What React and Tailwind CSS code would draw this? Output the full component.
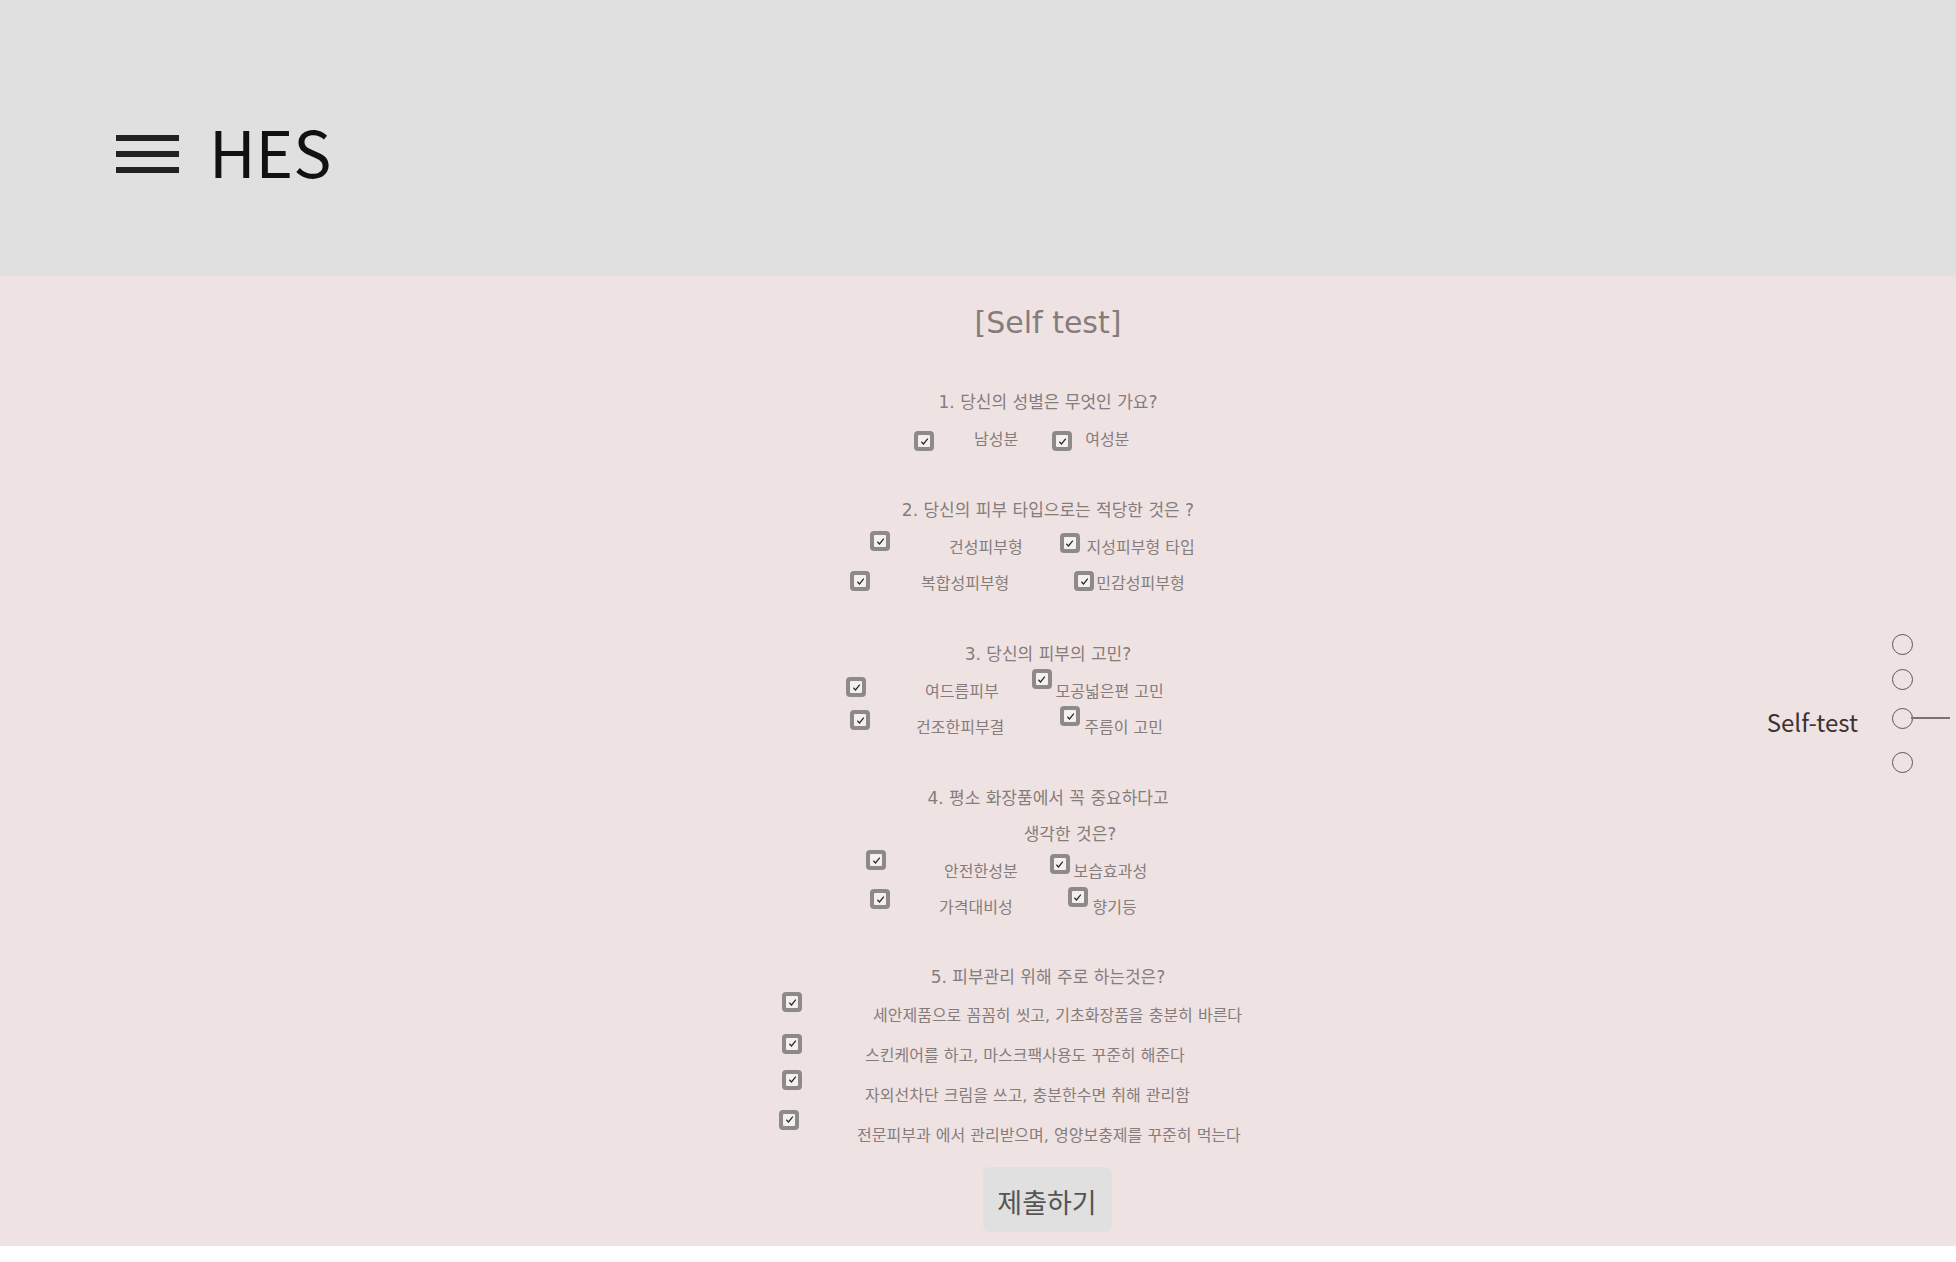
import React from "react";

function Cb({ className = "" }) {
  return (
    <span
      className={
        "inline-flex h-[20px] w-[20px] shrink-0 items-center justify-center rounded-[4px] bg-[#8e8a8a] " +
        className
      }
    >
      <span className="flex h-[12px] w-[12px] items-center justify-center rounded-[1px] bg-[#f4f0f0]">
        <svg viewBox="0 0 12 12" className="h-[11px] w-[11px]">
          <path d="M2.6 6.3 L4.9 8.7 L9.6 2.9" fill="none" stroke="#2a2424" strokeWidth="1.3" />
        </svg>
      </span>
    </span>
  );
}

function Label({ children, className = "" }) {
  return <span className={"mt-[5px] whitespace-nowrap text-[16px] leading-none " + className}>{children}</span>;
}

function QTitle({ children, className = "" }) {
  return (
    <div className={"flex h-9 items-center justify-center whitespace-nowrap pt-[4px] text-[17px] " + className}>
      {children}
    </div>
  );
}

export default function App() {
  return (
    <div className="relative min-h-[1262px] bg-white">
      {/* Header */}
      <header className="h-[276px] bg-[#e0e0e0] pl-[116px] pt-[114px]">
        <div className="flex h-[80px] items-center">
          <div className="flex flex-col gap-[10px]">
            <span className="block h-[6px] w-[63px] bg-[#222]" />
            <span className="block h-[6px] w-[63px] bg-[#222]" />
            <span className="block h-[6px] w-[63px] bg-[#222]" />
          </div>
          <span className="mb-[8px] ml-[30px] font-['Noto_Sans_CJK_KR',sans-serif] text-[64px] leading-none text-[#111]">
            HES
          </span>
        </div>
      </header>

      {/* Main */}
      <main className="bg-[#efe2e2] pb-[14px] pl-[140px] font-['DejaVu_Sans','Noto_Sans_CJK_KR',sans-serif] text-[#857c7c]">
        <div className="mx-auto flex w-[600px] flex-col">
          <div className="mt-[22px] flex h-[48px] items-center justify-center text-[30px] text-[#857c7c]">
            [Self test]
          </div>

          {/* Q1 */}
          <div className="mt-[37px] flex flex-col">
            <QTitle>1. 당신의 성별은 무엇인 가요?</QTitle>
            <div className="flex h-9 items-center">
              <Cb className="ml-[166px] mt-[8px]" />
              <Label className="ml-[40px]">남성분</Label>
              <Cb className="ml-[34px] mt-[8px]" />
              <Label className="ml-[13px]">여성분</Label>
            </div>
          </div>

          {/* Q2 */}
          <div className="mt-9 flex flex-col">
            <QTitle>2. 당신의 피부 타입으로는 적당한 것은 ?</QTitle>
            <div className="flex h-9 items-center">
              <Cb className="ml-[122px] mb-[8px]" />
              <Label className="ml-[59px]">건성피부형</Label>
              <Cb className="ml-[37px] mb-[4px]" />
              <Label className="ml-[7px]">지성피부형 타입</Label>
            </div>
            <div className="flex h-9 items-center">
              <Cb className="ml-[102px]" />
              <Label className="ml-[51px]">복합성피부형</Label>
              <Cb className="ml-[65px]" />
              <Label className="ml-[2px]">민감성피부형</Label>
            </div>
          </div>

          {/* Q3 */}
          <div className="mt-9 flex flex-col">
            <QTitle>3. 당신의 피부의 고민?</QTitle>
            <div className="flex h-9 items-center">
              <Cb className="ml-[98px] mb-[4px]" />
              <Label className="ml-[59px]">여드름피부</Label>
              <Cb className="ml-[33px] mb-[20px]" />
              <Label className="ml-[4px]">모공넓은편 고민</Label>
            </div>
            <div className="flex h-9 items-center">
              <Cb className="ml-[102px] mb-[10px]" />
              <Label className="ml-[46px]">건조한피부결</Label>
              <Cb className="ml-[56px] mb-[18px]" />
              <Label className="ml-[4px]">주름이 고민</Label>
            </div>
          </div>

          {/* Q4 */}
          <div className="mt-9 flex flex-col">
            <QTitle>4. 평소 화장품에서 꼭 중요하다고</QTitle>
            <QTitle className="pl-[44px]">생각한 것은?</QTitle>
            <div className="flex h-9 items-center">
              <Cb className="ml-[118px] mb-[18px]" />
              <Label className="ml-[58px]">안전한성분</Label>
              <Cb className="ml-[32px] mb-[10px]" />
              <Label className="ml-[4px]">보습효과성</Label>
            </div>
            <div className="flex h-9 items-center">
              <Cb className="ml-[122px] mb-[12px]" />
              <Label className="ml-[49px]">가격대비성</Label>
              <Cb className="ml-[55px] mb-[16px]" />
              <Label className="ml-[5px]">향기등</Label>
            </div>
          </div>

          {/* Q5 */}
          <div className="mt-9 flex flex-col">
            <QTitle className="h-[34px]">5. 피부관리 위해 주로 하는것은?</QTitle>
            <div className="flex h-[40px] items-center">
              <Cb className="ml-[34px] mb-[22px]" />
              <Label className="ml-[71px]">세안제품으로 꼼꼼히 씻고, 기초화장품을 충분히 바른다</Label>
            </div>
            <div className="flex h-[40px] items-center">
              <Cb className="ml-[34px] mb-[19px]" />
              <Label className="ml-[63px]">스킨케어를 하고, 마스크팩사용도 꾸준히 해준다</Label>
            </div>
            <div className="flex h-[40px] items-center">
              <Cb className="ml-[34px] mb-[27px]" />
              <Label className="ml-[63px]">자외선차단 크림을 쓰고, 충분한수면 취해 관리함</Label>
            </div>
            <div className="flex h-[40px] items-center">
              <Cb className="ml-[31px] mb-[27px]" />
              <Label className="ml-[58px]">전문피부과 에서 관리받으며, 영양보충제를 꾸준히 먹는다</Label>
            </div>
          </div>

          <div className="mt-[14px] flex justify-center pr-[2px]">
            <button
              type="button"
              className="flex h-[65px] w-[129px] items-center justify-center rounded-[7px] bg-[#e1e0e0] pt-[6px] font-['Noto_Sans_CJK_KR',sans-serif] text-[27px] text-[#555]"
            >
              제출하기
            </button>
          </div>
        </div>
      </main>

      {/* Right side navigation */}
      <nav className="absolute right-[43px] top-[627px] flex flex-col items-end font-['Noto_Sans_CJK_KR',sans-serif]">
        <div className="flex h-[35px] items-center">
          <span className="block h-[21px] w-[21px] rounded-full border-[1.5px] border-[#5e5555]" />
        </div>
        <div className="flex h-[35px] items-center">
          <span className="block h-[21px] w-[21px] rounded-full border-[1.5px] border-[#5e5555]" />
        </div>
        <div className="flex h-[42px] items-center">
          <span className="mr-[34px] mt-[8px] text-[24px] leading-none text-[#3b3333]">Self-test</span>
          <span className="relative block h-[21px] w-[21px] rounded-full border-[1.5px] border-[#5e5555]">
            <span className="absolute left-[18px] top-[8.5px] block h-[2px] w-[39px] bg-[#7a7272]" />
          </span>
        </div>
        <div className="flex h-[46px] items-center">
          <span className="block h-[21px] w-[21px] rounded-full border-[1.5px] border-[#5e5555]" />
        </div>
      </nav>
    </div>
  );
}
